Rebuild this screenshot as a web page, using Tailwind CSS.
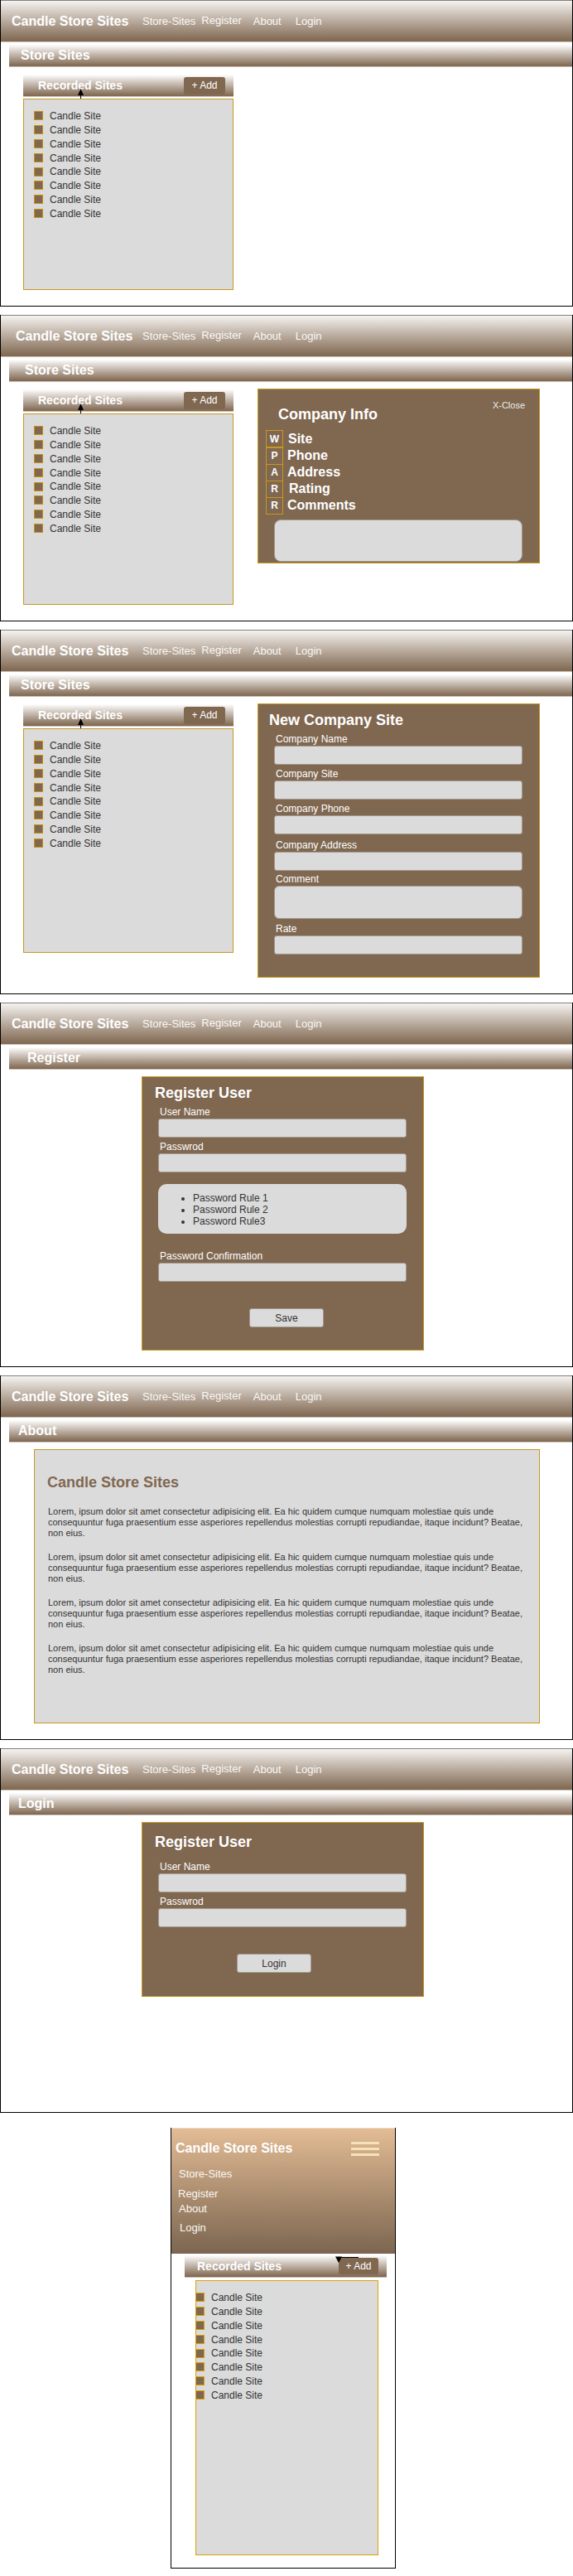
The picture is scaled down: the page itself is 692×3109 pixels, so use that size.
<!DOCTYPE html>
<html lang="en">
  <head>
    <meta charset="UTF-8" />
    <title>Candle Store Sites</title>
    <meta name="viewport" content="width=device-width, initial-scale=1.0" />
    <script src="https://cdn.jsdelivr.net/npm/@tailwindcss/browser@4"></script>
  </head>
  <body class="bg-white font-['Liberation_Sans',Arial,sans-serif] text-[#333]">

    <!-- Store sites: list only -->
    <section class="h-[370px] border-x border-b border-black overflow-hidden">
      <header class="flex items-center h-[51px] pl-[13px] border-t border-b border-t-[#808080] border-b-[#c9bfb3] bg-gradient-to-b from-[#f5f3f1] to-[#7f6750] text-[#faf8f5] text-[13px]">
        <h1 class="w-[158px] text-[16px] font-bold text-white">Candle Store Sites</h1>
        <a>Store-Sites</a><a class="ml-[7px] mb-[2px]">Register</a><a class="ml-[14px]">About</a><a class="ml-[17px]">Login</a>
      </header>
      <div class="flex items-center h-[27px] mt-[3px] ml-[10px] pl-[14px] border-b border-[#c9bfb3] bg-gradient-to-b from-white to-[#7f6750] text-[16px] font-bold text-white">Store Sites</div>
      <div class="flex items-start mt-[8px]">
        <div class="relative w-[254px] ml-[27px] mt-[1px]">
          <div class="flex items-center justify-between h-[27px] pl-[18px] pr-[10px] border-b border-[#c9bfb3] bg-gradient-to-b from-white to-[#7f6750] text-white">
            <span class="text-[14px] font-bold">Recorded Sites</span>
            <button class="w-[50px] h-[21px] rounded-[3px] bg-[#7f6750] text-[12px]">+ Add</button>
          </div>
          <svg class="absolute left-[65px] top-[17px]" width="9" height="12" viewBox="0 0 9 12"><path d="M4.5 0L8 8H5v4H4V8H1z" fill="#000"/></svg>
          <ul class="h-[231px] mt-[2px] pt-[11px] border border-[#c8981e] bg-[#dbdbdb] text-[12px]">
            <li class="flex items-center h-[17px]"><span class="w-[11px] h-[11px] ml-[12px] mr-[8px] border border-[#c8920f] bg-[#7f6750]"></span>Candle Site</li>
            <li class="flex items-center h-[17px]"><span class="w-[11px] h-[11px] ml-[12px] mr-[8px] border border-[#c8920f] bg-[#7f6750]"></span>Candle Site</li>
            <li class="flex items-center h-[17px]"><span class="w-[11px] h-[11px] ml-[12px] mr-[8px] border border-[#c8920f] bg-[#7f6750]"></span>Candle Site</li>
            <li class="flex items-center h-[17px]"><span class="w-[11px] h-[11px] ml-[12px] mr-[8px] border border-[#c8920f] bg-[#7f6750]"></span>Candle Site</li>
            <li class="flex items-center h-[16px]"><span class="w-[11px] h-[11px] ml-[12px] mr-[8px] border border-[#c8920f] bg-[#7f6750]"></span>Candle Site</li>
            <li class="flex items-center h-[17px]"><span class="w-[11px] h-[11px] ml-[12px] mr-[8px] border border-[#c8920f] bg-[#7f6750]"></span>Candle Site</li>
            <li class="flex items-center h-[17px]"><span class="w-[11px] h-[11px] ml-[12px] mr-[8px] border border-[#c8920f] bg-[#7f6750]"></span>Candle Site</li>
            <li class="flex items-center h-[17px]"><span class="w-[11px] h-[11px] ml-[12px] mr-[8px] border border-[#c8920f] bg-[#7f6750]"></span>Candle Site</li>
          </ul>
        </div>
      </div>
    </section>

    <!-- Store sites: company info -->
    <section class="h-[370px] mt-[10px] border-x border-b border-black overflow-hidden">
      <header class="flex items-center h-[51px] pl-[18px] border-t border-b border-t-[#808080] border-b-[#c9bfb3] bg-gradient-to-b from-[#f5f3f1] to-[#7f6750] text-[#faf8f5] text-[13px]">
        <h1 class="w-[153px] text-[16px] font-bold text-white">Candle Store Sites</h1>
        <a>Store-Sites</a><a class="ml-[7px] mb-[2px]">Register</a><a class="ml-[14px]">About</a><a class="ml-[17px]">Login</a>
      </header>
      <div class="flex items-center h-[27px] mt-[3px] ml-[10px] pl-[19px] border-b border-[#c9bfb3] bg-gradient-to-b from-white to-[#7f6750] text-[16px] font-bold text-white">Store Sites</div>
      <div class="flex items-start mt-[8px]">
        <div class="relative w-[254px] ml-[27px] mt-[1px]">
          <div class="flex items-center justify-between h-[27px] pl-[18px] pr-[10px] border-b border-[#c9bfb3] bg-gradient-to-b from-white to-[#7f6750] text-white">
            <span class="text-[14px] font-bold">Recorded Sites</span>
            <button class="w-[50px] h-[21px] rounded-[3px] bg-[#7f6750] text-[12px]">+ Add</button>
          </div>
          <svg class="absolute left-[65px] top-[17px]" width="9" height="12" viewBox="0 0 9 12"><path d="M4.5 0L8 8H5v4H4V8H1z" fill="#000"/></svg>
          <ul class="h-[231px] mt-[2px] pt-[11px] border border-[#c8981e] bg-[#dbdbdb] text-[12px]">
            <li class="flex items-center h-[17px]"><span class="w-[11px] h-[11px] ml-[12px] mr-[8px] border border-[#c8920f] bg-[#7f6750]"></span>Candle Site</li>
            <li class="flex items-center h-[17px]"><span class="w-[11px] h-[11px] ml-[12px] mr-[8px] border border-[#c8920f] bg-[#7f6750]"></span>Candle Site</li>
            <li class="flex items-center h-[17px]"><span class="w-[11px] h-[11px] ml-[12px] mr-[8px] border border-[#c8920f] bg-[#7f6750]"></span>Candle Site</li>
            <li class="flex items-center h-[17px]"><span class="w-[11px] h-[11px] ml-[12px] mr-[8px] border border-[#c8920f] bg-[#7f6750]"></span>Candle Site</li>
            <li class="flex items-center h-[16px]"><span class="w-[11px] h-[11px] ml-[12px] mr-[8px] border border-[#c8920f] bg-[#7f6750]"></span>Candle Site</li>
            <li class="flex items-center h-[17px]"><span class="w-[11px] h-[11px] ml-[12px] mr-[8px] border border-[#c8920f] bg-[#7f6750]"></span>Candle Site</li>
            <li class="flex items-center h-[17px]"><span class="w-[11px] h-[11px] ml-[12px] mr-[8px] border border-[#c8920f] bg-[#7f6750]"></span>Candle Site</li>
            <li class="flex items-center h-[17px]"><span class="w-[11px] h-[11px] ml-[12px] mr-[8px] border border-[#c8920f] bg-[#7f6750]"></span>Candle Site</li>
          </ul>
        </div>
        <div class="relative w-[341px] h-[211px] ml-[29px] border border-[#c8981e] bg-[#7f6750] text-white">
          <a class="absolute right-[17px] top-[11px] text-[11px] text-[#eee]">X-Close</a>
          <h2 class="ml-[24px] mt-[18px] h-[24px] text-[18px] leading-[24px] font-bold">Company Info</h2>
          <div class="mt-[7px] ml-[9px] text-[16px] font-bold">
            <div class="flex items-center h-[21px]"><span class="flex items-center justify-center w-[21px] h-[21px] mr-[6px] border border-[#c8981e] text-[12px]">W</span>Site</div>
            <div class="flex items-center h-[20px]"><span class="flex items-center justify-center w-[21px] h-[21px] mr-[5px] border border-[#c8981e] text-[12px]">P</span>Phone</div>
            <div class="flex items-center h-[20px]"><span class="flex items-center justify-center w-[21px] h-[21px] mr-[5px] border border-[#c8981e] text-[12px]">A</span>Address</div>
            <div class="flex items-center h-[20px]"><span class="flex items-center justify-center w-[21px] h-[21px] mr-[7px] border border-[#c8981e] text-[12px]">R</span>Rating</div>
            <div class="flex items-center h-[20px]"><span class="flex items-center justify-center w-[21px] h-[21px] mr-[5px] border border-[#c8981e] text-[12px]">R</span>Comments</div>
          </div>
          <textarea class="block w-[300px] h-[51px] ml-[19px] mt-[7px] rounded-[8px] border border-[#a39a8e] bg-[#dbdbdb] resize-none"></textarea>
        </div>
      </div>
    </section>

    <!-- Store sites: new company -->
    <section class="h-[440px] mt-[10px] border-x border-b border-black overflow-hidden">
      <header class="flex items-center h-[51px] pl-[13px] border-t border-b border-t-[#808080] border-b-[#c9bfb3] bg-gradient-to-b from-[#f5f3f1] to-[#7f6750] text-[#faf8f5] text-[13px]">
        <h1 class="w-[158px] text-[16px] font-bold text-white">Candle Store Sites</h1>
        <a>Store-Sites</a><a class="ml-[7px] mb-[2px]">Register</a><a class="ml-[14px]">About</a><a class="ml-[17px]">Login</a>
      </header>
      <div class="flex items-center h-[27px] mt-[3px] ml-[10px] pl-[14px] border-b border-[#c9bfb3] bg-gradient-to-b from-white to-[#7f6750] text-[16px] font-bold text-white">Store Sites</div>
      <div class="flex items-start mt-[8px]">
        <div class="relative w-[254px] ml-[27px] mt-[1px]">
          <div class="flex items-center justify-between h-[27px] pl-[18px] pr-[10px] border-b border-[#c9bfb3] bg-gradient-to-b from-white to-[#7f6750] text-white">
            <span class="text-[14px] font-bold">Recorded Sites</span>
            <button class="w-[50px] h-[21px] rounded-[3px] bg-[#7f6750] text-[12px]">+ Add</button>
          </div>
          <svg class="absolute left-[65px] top-[17px]" width="9" height="12" viewBox="0 0 9 12"><path d="M4.5 0L8 8H5v4H4V8H1z" fill="#000"/></svg>
          <ul class="h-[271px] mt-[2px] pt-[11px] border border-[#c8981e] bg-[#dbdbdb] text-[12px]">
            <li class="flex items-center h-[17px]"><span class="w-[11px] h-[11px] ml-[12px] mr-[8px] border border-[#c8920f] bg-[#7f6750]"></span>Candle Site</li>
            <li class="flex items-center h-[17px]"><span class="w-[11px] h-[11px] ml-[12px] mr-[8px] border border-[#c8920f] bg-[#7f6750]"></span>Candle Site</li>
            <li class="flex items-center h-[17px]"><span class="w-[11px] h-[11px] ml-[12px] mr-[8px] border border-[#c8920f] bg-[#7f6750]"></span>Candle Site</li>
            <li class="flex items-center h-[17px]"><span class="w-[11px] h-[11px] ml-[12px] mr-[8px] border border-[#c8920f] bg-[#7f6750]"></span>Candle Site</li>
            <li class="flex items-center h-[16px]"><span class="w-[11px] h-[11px] ml-[12px] mr-[8px] border border-[#c8920f] bg-[#7f6750]"></span>Candle Site</li>
            <li class="flex items-center h-[17px]"><span class="w-[11px] h-[11px] ml-[12px] mr-[8px] border border-[#c8920f] bg-[#7f6750]"></span>Candle Site</li>
            <li class="flex items-center h-[17px]"><span class="w-[11px] h-[11px] ml-[12px] mr-[8px] border border-[#c8920f] bg-[#7f6750]"></span>Candle Site</li>
            <li class="flex items-center h-[17px]"><span class="w-[11px] h-[11px] ml-[12px] mr-[8px] border border-[#c8920f] bg-[#7f6750]"></span>Candle Site</li>
          </ul>
        </div>
        <form class="w-[341px] h-[331px] ml-[29px] pt-[7px] border border-[#c8981e] bg-[#7f6750] text-white text-[12px]">
          <h2 class="ml-[13px] h-[24px] text-[18px] leading-[24px] font-bold">New Company Site</h2>
          <label class="block h-[16px] leading-[16px] ml-[21px] mt-[3px]">Company Name</label>
          <input class="block w-[300px] h-[23px] ml-[19px] rounded-[3px] border border-[#a39a8e] bg-[#dbdbdb]" />
          <label class="block h-[16px] leading-[16px] ml-[21px] mt-[3px]">Company Site</label>
          <input class="block w-[300px] h-[23px] ml-[19px] rounded-[3px] border border-[#a39a8e] bg-[#dbdbdb]" />
          <label class="block h-[16px] leading-[16px] ml-[21px] mt-[3px]">Company Phone</label>
          <input class="block w-[300px] h-[23px] ml-[19px] rounded-[3px] border border-[#a39a8e] bg-[#dbdbdb]" />
          <label class="block h-[16px] leading-[16px] ml-[21px] mt-[5px]">Company Address</label>
          <input class="block w-[300px] h-[23px] ml-[19px] rounded-[3px] border border-[#a39a8e] bg-[#dbdbdb]" />
          <label class="block h-[16px] leading-[16px] ml-[21px] mt-[2px]">Comment</label>
          <textarea class="block w-[300px] h-[40px] ml-[19px] rounded-[6px] border border-[#a39a8e] bg-[#dbdbdb] resize-none"></textarea>
          <label class="block h-[16px] leading-[16px] ml-[21px] mt-[4px]">Rate</label>
          <input class="block w-[300px] h-[23px] ml-[19px] rounded-[3px] border border-[#a39a8e] bg-[#dbdbdb]" />
        </form>
      </div>
    </section>

    <!-- Register -->
    <section class="h-[440px] mt-[10px] border-x border-b border-black overflow-hidden">
      <header class="flex items-center h-[51px] pl-[13px] border-t border-b border-t-[#808080] border-b-[#c9bfb3] bg-gradient-to-b from-[#f5f3f1] to-[#7f6750] text-[#faf8f5] text-[13px]">
        <h1 class="w-[158px] text-[16px] font-bold text-white">Candle Store Sites</h1>
        <a>Store-Sites</a><a class="ml-[7px] mb-[2px]">Register</a><a class="ml-[14px]">About</a><a class="ml-[17px]">Login</a>
      </header>
      <div class="flex items-center h-[27px] mt-[3px] ml-[10px] pl-[22px] border-b border-[#c9bfb3] bg-gradient-to-b from-white to-[#7f6750] text-[16px] font-bold text-white">Register</div>
      <form class="w-[341px] h-[331px] ml-[170px] mt-[8px] pt-[7px] border border-[#c8981e] bg-[#7f6750] text-white text-[12px]">
        <h2 class="ml-[15px] h-[24px] text-[18px] leading-[24px] font-bold">Register User</h2>
        <label class="block h-[16px] leading-[16px] ml-[21px] mt-[3px]">User Name</label>
        <input class="block w-[300px] h-[23px] ml-[19px] rounded-[3px] border border-[#a39a8e] bg-[#dbdbdb]" />
        <label class="block h-[16px] leading-[16px] ml-[21px] mt-[3px]">Passwrod</label>
        <input class="block w-[300px] h-[23px] ml-[19px] rounded-[3px] border border-[#a39a8e] bg-[#dbdbdb]" />
        <ul class="w-[300px] h-[60px] ml-[19px] mt-[14px] pt-[10px] pl-[42px] list-disc rounded-[10px] bg-[#dbdbdb] text-[#333] text-[12px] leading-[14px]">
          <li>Password Rule 1</li>
          <li>Password Rule 2</li>
          <li>Password Rule3</li>
        </ul>
        <label class="block h-[16px] leading-[16px] ml-[21px] mt-[19px]">Password Confirmation</label>
        <input class="block w-[300px] h-[23px] ml-[19px] rounded-[3px] border border-[#a39a8e] bg-[#dbdbdb]" />
        <button type="button" class="block w-[90px] h-[23px] ml-[129px] mt-[32px] rounded-[3px] border border-[#a39a8e] bg-[#dbdbdb] text-[#333] text-[12px]">Save</button>
      </form>
    </section>

    <!-- About -->
    <section class="h-[440px] mt-[10px] border-x border-b border-black overflow-hidden">
      <header class="flex items-center h-[51px] pl-[13px] border-t border-b border-t-[#808080] border-b-[#c9bfb3] bg-gradient-to-b from-[#f5f3f1] to-[#7f6750] text-[#faf8f5] text-[13px]">
        <h1 class="w-[158px] text-[16px] font-bold text-white">Candle Store Sites</h1>
        <a>Store-Sites</a><a class="ml-[7px] mb-[2px]">Register</a><a class="ml-[14px]">About</a><a class="ml-[17px]">Login</a>
      </header>
      <div class="flex items-center h-[27px] mt-[3px] ml-[10px] pl-[11px] border-b border-[#c9bfb3] bg-gradient-to-b from-white to-[#7f6750] text-[16px] font-bold text-white">About</div>
      <div class="w-[611px] h-[331px] ml-[40px] mt-[8px] pt-[27px] pl-[15px] border border-[#c8981e] bg-[#dbdbdb]">
        <h2 class="h-[24px] text-[18px] leading-[24px] font-bold text-[#7f6750]">Candle Store Sites</h2>
        <p class="w-[578px] ml-[1px] mt-[17px] mb-[16px] text-[11px] leading-[13px]">Lorem, ipsum dolor sit amet consectetur adipisicing elit. Ea hic quidem cumque numquam molestiae quis unde consequuntur fuga praesentium esse asperiores repellendus molestias corrupti repudiandae, itaque incidunt? Beatae, non eius.</p>
        <p class="w-[578px] ml-[1px] mb-[16px] text-[11px] leading-[13px]">Lorem, ipsum dolor sit amet consectetur adipisicing elit. Ea hic quidem cumque numquam molestiae quis unde consequuntur fuga praesentium esse asperiores repellendus molestias corrupti repudiandae, itaque incidunt? Beatae, non eius.</p>
        <p class="w-[578px] ml-[1px] mb-[16px] text-[11px] leading-[13px]">Lorem, ipsum dolor sit amet consectetur adipisicing elit. Ea hic quidem cumque numquam molestiae quis unde consequuntur fuga praesentium esse asperiores repellendus molestias corrupti repudiandae, itaque incidunt? Beatae, non eius.</p>
        <p class="w-[578px] ml-[1px] text-[11px] leading-[13px]">Lorem, ipsum dolor sit amet consectetur adipisicing elit. Ea hic quidem cumque numquam molestiae quis unde consequuntur fuga praesentium esse asperiores repellendus molestias corrupti repudiandae, itaque incidunt? Beatae, non eius.</p>
      </div>
    </section>

    <!-- Login -->
    <section class="h-[440px] mt-[10px] border-x border-b border-black overflow-hidden">
      <header class="flex items-center h-[51px] pl-[13px] border-t border-b border-t-[#808080] border-b-[#c9bfb3] bg-gradient-to-b from-[#f5f3f1] to-[#7f6750] text-[#faf8f5] text-[13px]">
        <h1 class="w-[158px] text-[16px] font-bold text-white">Candle Store Sites</h1>
        <a>Store-Sites</a><a class="ml-[7px] mb-[2px]">Register</a><a class="ml-[14px]">About</a><a class="ml-[17px]">Login</a>
      </header>
      <div class="flex items-center h-[27px] mt-[3px] ml-[10px] pl-[11px] border-b border-[#c9bfb3] bg-gradient-to-b from-white to-[#7f6750] text-[16px] font-bold text-white">Login</div>
      <form class="w-[341px] h-[211px] ml-[170px] mt-[8px] pt-[11px] border border-[#c8981e] bg-[#7f6750] text-white text-[12px]">
        <h2 class="ml-[15px] h-[24px] text-[18px] leading-[24px] font-bold">Register User</h2>
        <label class="block h-[16px] leading-[16px] ml-[21px] mt-[10px]">User Name</label>
        <input class="block w-[300px] h-[23px] ml-[19px] rounded-[3px] border border-[#a39a8e] bg-[#dbdbdb]" />
        <label class="block h-[16px] leading-[16px] ml-[21px] mt-[3px]">Passwrod</label>
        <input class="block w-[300px] h-[23px] ml-[19px] rounded-[3px] border border-[#a39a8e] bg-[#dbdbdb]" />
        <button type="button" class="block w-[90px] h-[23px] ml-[114px] mt-[32px] rounded-[3px] border border-[#a39a8e] bg-[#dbdbdb] text-[#333] text-[12px]">Login</button>
      </form>
    </section>

    <!-- Mobile -->
    <section class="relative w-[272px] h-[532px] ml-[206px] mt-[18px] border-x border-b border-black">
      <header class="h-[152px] border-t border-[#efdcc9] bg-gradient-to-b from-[#e3bc95] to-[#7c6650] text-[#faf8f5] text-[13px] leading-[16px]">
        <div class="flex items-center h-[24px] mt-[12px] pl-[5px] pr-[19px]">
          <h1 class="text-[16px] font-bold text-white">Candle Store Sites</h1>
          <div class="flex flex-col gap-[4px] w-[34px] ml-auto">
            <span class="h-[3px] bg-[#f5e2b8]"></span>
            <span class="h-[3px] bg-[#f5e2b8]"></span>
            <span class="h-[3px] bg-[#f5e2b8]"></span>
          </div>
        </div>
        <a class="block ml-[9px] mt-[11px]">Store-Sites</a>
        <a class="block ml-[8px] mt-[8px]">Register</a>
        <a class="block ml-[9px] mt-[2px]">About</a>
        <a class="block ml-[10px] mt-[7px]">Login</a>
      </header>
      <div class="relative flex items-center justify-between w-[244px] h-[27px] ml-[16px] mt-[2px] pl-[15px] pr-[10px] border-b border-[#c9bfb3] bg-gradient-to-b from-white to-[#7f6750] text-white">
        <span class="text-[14px] font-bold">Recorded Sites</span>
        <button class="w-[48px] h-[20px] rounded-[3px] bg-[#7f6750] text-[12px]">+ Add</button>
        <svg class="absolute left-[182px] top-0" width="28" height="9" viewBox="0 0 28 9"><path d="M0 1.5h8L4 9z" fill="#000"/><path d="M4 2.5h24" stroke="#000"/></svg>
      </div>
      <ul class="w-[221px] h-[332px] ml-[29px] mt-[3px] pt-[11px] border border-[#dca000] bg-[#dbdbdb] text-[12px]">
        <li class="flex items-center h-[17px]"><span class="w-[11px] h-[11px] -ml-px mr-[8px] border border-[#dca000] bg-[#7f6750]"></span>Candle Site</li>
        <li class="flex items-center h-[17px]"><span class="w-[11px] h-[11px] -ml-px mr-[8px] border border-[#dca000] bg-[#7f6750]"></span>Candle Site</li>
        <li class="flex items-center h-[17px]"><span class="w-[11px] h-[11px] -ml-px mr-[8px] border border-[#dca000] bg-[#7f6750]"></span>Candle Site</li>
        <li class="flex items-center h-[17px]"><span class="w-[11px] h-[11px] -ml-px mr-[8px] border border-[#dca000] bg-[#7f6750]"></span>Candle Site</li>
        <li class="flex items-center h-[16px]"><span class="w-[11px] h-[11px] -ml-px mr-[8px] border border-[#dca000] bg-[#7f6750]"></span>Candle Site</li>
        <li class="flex items-center h-[17px]"><span class="w-[11px] h-[11px] -ml-px mr-[8px] border border-[#dca000] bg-[#7f6750]"></span>Candle Site</li>
        <li class="flex items-center h-[17px]"><span class="w-[11px] h-[11px] -ml-px mr-[8px] border border-[#dca000] bg-[#7f6750]"></span>Candle Site</li>
        <li class="flex items-center h-[17px]"><span class="w-[11px] h-[11px] -ml-px mr-[8px] border border-[#dca000] bg-[#7f6750]"></span>Candle Site</li>
      </ul>
    </section>
  </body>
</html>
